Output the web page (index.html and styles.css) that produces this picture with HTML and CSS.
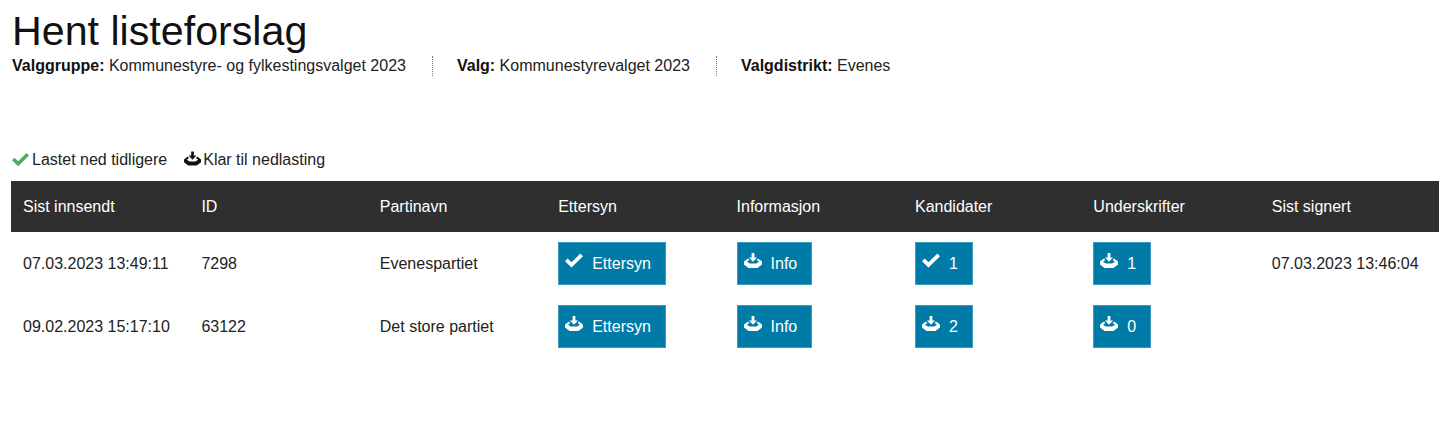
FILE: index.html
```html
<!DOCTYPE html>
<html lang="nb">
<head>
  <meta charset="UTF-8" />
  <meta name="viewport" content="width=device-width, initial-scale=1.0"/>
  <title>Hent listeforslag</title>
  <link rel="stylesheet" href="styles.css">
</head>
<body>
  <svg class="defs" width="0" height="0" aria-hidden="true">
    <symbol id="icon-check" viewBox="0 0 18 16">
      <path d="M0 8.200 2.700 5.500 6.500 9.300 15.300.6 18 3.300 6.500 14.600Z"/>
    </symbol>
    <symbol id="icon-download" viewBox="0 0 18 16">
      <path d="M7.600 0h2.800v4.400h2.700L9 8.800 4.900 4.400h2.700Z"/>
      <path d="M4 5.400 0 8.600v2.800L4.500 15h9l4.500-3.600V8.600L14 5.400l-1.300 1.500 2.300 1.900-2.800 1.800H5.800L3 8.800l2.300-1.900Z"/>
    </symbol>
  </svg>

  <h1>Hent listeforslag</h1>
  <div class="meta">
    <p><strong>Valggruppe:</strong> Kommunestyre- og fylkestingsvalget 2023</p>
    <p><strong>Valg:</strong> Kommunestyrevalget 2023</p>
    <p><strong>Valgdistrikt:</strong> Evenes</p>
  </div>

  <div class="legend">
    <span class="legend-item"><svg class="icon icon-green"><use href="#icon-check"/></svg>Lastet ned tidligere</span>
    <span class="legend-item"><svg class="icon icon-dark"><use href="#icon-download"/></svg>Klar til nedlasting</span>
  </div>

  <table>
    <thead>
      <tr>
        <th>Sist innsendt</th>
        <th>ID</th>
        <th>Partinavn</th>
        <th>Ettersyn</th>
        <th>Informasjon</th>
        <th>Kandidater</th>
        <th>Underskrifter</th>
        <th>Sist signert</th>
      </tr>
    </thead>
    <tbody>
      <tr>
        <td>07.03.2023 13:49:11</td>
        <td>7298</td>
        <td>Evenespartiet</td>
        <td><button class="btn"><svg class="icon"><use href="#icon-check"/></svg>Ettersyn</button></td>
        <td><button class="btn"><svg class="icon"><use href="#icon-download"/></svg>Info</button></td>
        <td><button class="btn"><svg class="icon"><use href="#icon-check"/></svg>1</button></td>
        <td><button class="btn"><svg class="icon"><use href="#icon-download"/></svg>1</button></td>
        <td>07.03.2023 13:46:04</td>
      </tr>
      <tr>
        <td>09.02.2023 15:17:10</td>
        <td>63122</td>
        <td>Det store partiet</td>
        <td><button class="btn"><svg class="icon"><use href="#icon-download"/></svg>Ettersyn</button></td>
        <td><button class="btn"><svg class="icon"><use href="#icon-download"/></svg>Info</button></td>
        <td><button class="btn"><svg class="icon"><use href="#icon-download"/></svg>2</button></td>
        <td><button class="btn"><svg class="icon"><use href="#icon-download"/></svg>0</button></td>
        <td></td>
      </tr>
    </tbody>
  </table>
</body>
</html>
```

FILE: styles.css
```css
body {
  font-family: "Liberation Sans", Arial, sans-serif;
  font-size: 16px;
  color: #222;
  background-color: #fff;
  margin: 0;
  padding: 8px 0 0 12px;
}

.defs {
  display: block;
  height: 0;
}

h1 {
  font-size: 41.2px;
  font-weight: 400;
  line-height: 46px;
  color: #111;
  margin: 0;
}

.meta {
  display: flex;
  margin-top: 2px;
}

.meta p {
  margin: 0;
  line-height: 20px;
  padding-right: 26.5px;
  margin-right: 23.5px;
  border-right: 1px dotted #777;
}

.meta p:last-child {
  border-right: none;
}

.meta strong {
  color: #111;
}

.legend {
  display: flex;
  align-items: center;
  gap: 17px;
  margin-top: 74px;
  line-height: 20px;
}

.legend-item {
  display: flex;
  align-items: center;
}

.icon {
  width: 18px;
  height: 16px;
  fill: currentColor;
  flex: none;
}

.icon-green {
  color: #4cae5b;
  margin-right: 3px;
  width: 17px;
}

.icon-dark {
  color: #111;
  margin-right: 2px;
  width: 17px;
  position: relative;
  top: -1px;
}

table {
  width: 1428px;
  margin: 11px 0 0 -1px;
  border-collapse: collapse;
  table-layout: fixed;
}

th {
  width: 178.4px;
  box-sizing: border-box;
  background-color: #2f2f2f;
  color: #fff;
  font-weight: 400;
  text-align: left;
  height: 51px;
  padding: 0 12px;
}

th:last-child {
  width: auto;
}

td {
  height: 63px;
  padding: 0 12px;
}

.btn {
  display: inline-flex;
  align-items: center;
  gap: 9px;
  height: 43px;
  padding: 0 14px 0 6px;
  font-family: inherit;
  font-size: 16px;
  color: #fff;
  background-color: #007ba7;
  border: 1px solid #3d9bbd;
  vertical-align: middle;
}

.btn .icon {
  position: relative;
  top: -3px;
}
```
